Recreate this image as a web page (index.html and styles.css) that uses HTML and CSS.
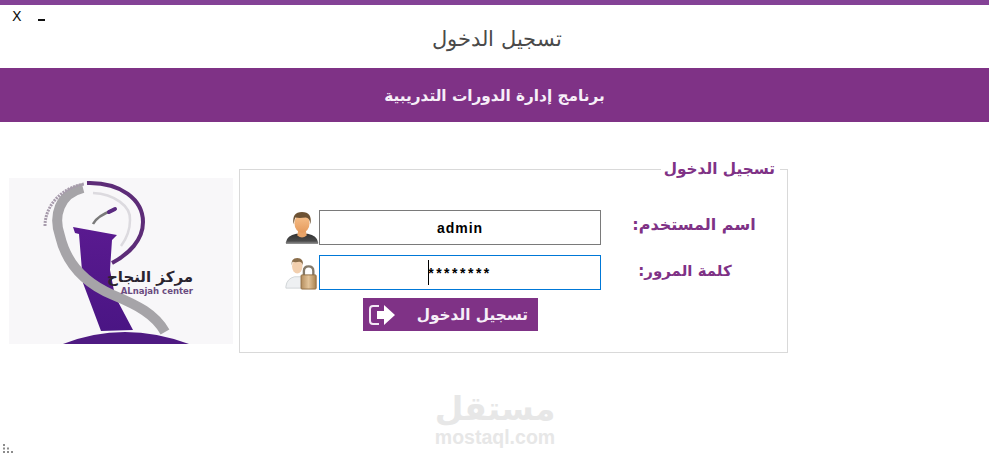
FILE: index.html
```html
<!DOCTYPE html>
<html lang="ar">
  <head>
    <meta charset="UTF-8" />
    <meta name="viewport" content="width=device-width, initial-scale=1.0" />
    <title>تسجيل الدخول</title>
    <link rel="stylesheet" href="styles.css">
  </head>
  <body>
    <div class="topbar"></div>
    <header class="header">
      <div class="window-btns">
        <span class="btn-close">X</span>
        <span class="btn-min"></span>
      </div>
      <h1 dir="rtl">تسجيل الدخول</h1>
    </header>
    <div class="banner" dir="rtl">برنامج إدارة الدورات التدريبية</div>

    <main class="main">
      <div class="logo">
        <svg width="224" height="166" viewBox="0 0 224 166">
          <defs>
            <linearGradient id="podium" x1="0" y1="0" x2="0" y2="1">
              <stop offset="0" stop-color="#5a1a90" />
              <stop offset="1" stop-color="#4a1584" />
            </linearGradient>
          </defs>
          <rect width="224" height="166" fill="#f8f7f9" />
          <path d="M54 166 Q115 142 180 166 Z" fill="#4f1a82" />
          <path d="M84 46 Q88 38 104 32" fill="none" stroke="#7a7a7a" stroke-width="2.5" />
          <path d="M100 34 L106 31" fill="none" stroke="#5a2a80" stroke-width="4" stroke-linecap="round" />
          <path d="M64 49 L66 55 L70 56 L74 105 L92 153 L124 152 L106 118 L101 92 L103 62 L108 57 Z" fill="url(#podium)" />
          <path d="M84 15 C105 16 122 28 121 42 C121 50 118 60 112 68" fill="none" stroke="#dcdadf" stroke-width="2.5" />
          <path d="M78 5 C112 4 134 22 134 44 C134 62 120 76 103 85" fill="none" stroke="#5d2c78" stroke-width="4" />
          <path d="M74 10 C50 16 44 38 51 58 C58 88 78 106 104 117 C128 127 146 136 156 154" fill="none" stroke="#a6a4a8" stroke-width="10" />
          <path d="M36 48 C36 28 52 10 75 6" fill="none" stroke="#a79bac" stroke-width="3" stroke-dasharray="2 1" />
          <text class="logo-ar" x="184" y="104" direction="rtl">مركز النجاح</text>
          <text class="logo-en" x="184" y="116" text-anchor="end">ALnajah center</text>
        </svg>
      </div>

      <fieldset class="login-box" dir="rtl">
        <legend>تسجيل الدخول</legend>
        <div class="row">
          <label class="row-label" for="user">اسم المستخدم:</label>
          <input class="field" id="user" type="text" value="admin" dir="ltr" />
          <svg class="row-icon" width="34" height="36" viewBox="0 0 36 36">
            <defs>
              <linearGradient id="skin" x1="0" y1="0" x2="0" y2="1">
                <stop offset="0" stop-color="#f9c48f" />
                <stop offset="1" stop-color="#e59a5c" />
              </linearGradient>
              <linearGradient id="shirt" x1="0" y1="0" x2="0" y2="1">
                <stop offset="0" stop-color="#333" />
                <stop offset="0.7" stop-color="#4a4a4a" />
                <stop offset="1" stop-color="#9a9a9a" />
              </linearGradient>
            </defs>
            <path d="M1 33 Q2 26 12 24 L24 24 Q34 26 35 33 L35 35 L1 35 Z" fill="url(#shirt)" />
            <path d="M14 20 L22 20 L23 26 Q18 30 13 26 Z" fill="#e8a368" />
            <ellipse cx="18" cy="13" rx="8" ry="10" fill="url(#skin)" />
            <path d="M9 14 Q7 1 18 1 Q29 1 27 14 Q26 7 22 7 Q15 8 11 7 Q10 9 9 14 Z" fill="#6d5233" />
          </svg>
        </div>
        <div class="row">
          <label class="row-label row-label-short" for="pass">كلمة المرور:</label>
          <div class="field-wrap">
            <input class="field field-focus" id="pass" type="text" value="********" dir="ltr" />
            <span class="caret"></span>
          </div>
          <svg class="row-icon" width="34" height="36" viewBox="0 0 36 36">
            <defs>
              <linearGradient id="lock" x1="0" y1="0" x2="1" y2="0">
                <stop offset="0" stop-color="#b48d5e" />
                <stop offset="0.5" stop-color="#e3c49a" />
                <stop offset="1" stop-color="#a9824f" />
              </linearGradient>
            </defs>
            <path d="M1 32 Q2 24 10 22 L18 22 L20 34 L1 34 Z" fill="#eef0f2" stroke="#cfd3d6" stroke-width="1" />
            <ellipse cx="13" cy="11" rx="5.5" ry="7.5" fill="#f2cfae" />
            <path d="M7 10 Q6 2 13 2 Q20 2 19 10 Q18 6 15 6 Q11 7 8 6 Z" fill="#8a6d4a" />
            <path d="M20 21 L20 16 Q20 11 25 11 Q30 11 30 16 L30 21" fill="none" stroke="#857a6a" stroke-width="2.5" />
            <rect x="17" y="20" width="16" height="15" rx="1" fill="url(#lock)" stroke="#8f6d43" stroke-width="1" />
          </svg>
        </div>
        <div class="actions">
          <button class="button" type="button">
            <span>تسجيل الدخول</span>
            <svg width="28" height="24" viewBox="0 0 28 24">
              <path d="M11 3 L5 3 Q2 3 2 6 L2 18 Q2 21 5 21 L11 21" fill="none" stroke="#f3e9f5" stroke-width="2" />
              <path d="M9 8 L16 8 L16 2 L27 12 L16 22 L16 16 L9 16 Z" fill="#fff" />
            </svg>
          </button>
        </div>
      </fieldset>
    </main>

    <footer class="watermark">
      <div class="wm-ar" dir="rtl">مستقل</div>
      <div class="wm-en">mostaql.com</div>
    </footer>

    <div class="grip">
      <svg width="14" height="9" viewBox="0 0 14 9" fill="#8c8c8c">
        <rect x="3" y="0" width="2" height="2" />
        <rect x="3" y="3.5" width="2" height="2" />
        <rect x="7" y="3.5" width="2" height="2" />
        <rect x="3" y="7" width="2" height="2" />
        <rect x="7" y="7" width="2" height="2" />
        <rect x="11" y="7" width="2" height="2" />
      </svg>
    </div>
  </body>
</html>
```

FILE: styles.css
```css
* {
  margin: 0;
  padding: 0;
  box-sizing: border-box;
}
body {
  position: relative;
  height: 457px;
  overflow: hidden;
  background: #fff;
  font-family: "DejaVu Sans", sans-serif;
}
.topbar {
  height: 5px;
  background-color: #844296;
}
.header {
  position: relative;
  height: 63px;
  padding-left: 5px;
  display: flex;
  align-items: center;
  justify-content: center;
}
.header h1 {
  font-size: 21px;
  font-weight: 300;
  color: #4a4a4a;
  margin-top: 5px;
}
.window-btns {
  position: absolute;
  top: 4px;
  left: 12px;
  display: flex;
  align-items: center;
  gap: 16px;
}
.btn-close {
  font-size: 14px;
  line-height: 14px;
  color: #111;
}
.btn-min {
  width: 7px;
  height: 2px;
  margin-top: 7px;
  background-color: #111;
}
.banner {
  height: 54px;
  padding-top: 1px;
  display: flex;
  align-items: center;
  justify-content: center;
  background-color: #7f3286;
  color: #f6eff8;
  font-size: 15.3px;
  font-weight: bold;
}
.main {
  display: flex;
  align-items: flex-start;
  gap: 6px;
  padding: 38px 0 0 9px;
}
.logo {
  margin-top: 18px;
  width: 224px;
  height: 166px;
}
.logo-ar {
  font-size: 15px;
  font-weight: bold;
  fill: #2a2430;
}
.logo-en {
  font-size: 8.5px;
  font-weight: bold;
  fill: #6a4b80;
}
.login-box {
  width: 549px;
  height: 193px;
  border: 1px solid #d9d9d9;
  padding: 31px 0 0 0;
}
.login-box legend {
  margin-right: 7px;
  padding: 0 5px 0 3px;
  font-size: 15.3px;
  font-weight: bold;
  line-height: 19px;
  color: #7f3286;
}
.row {
  display: flex;
  align-items: center;
  height: 35px;
  margin-bottom: 10px;
}
.row-label {
  width: 186px;
  padding-bottom: 6px;
  text-align: center;
  flex-shrink: 0;
  font-size: 16px;
  font-weight: bold;
  color: #7f3286;
}
.row-label-short {
  padding-right: 18px;
  padding-bottom: 4px;
  font-size: 15px;
}
.field-wrap {
  position: relative;
  width: 282px;
  flex-shrink: 0;
}
.field {
  width: 282px;
  height: 35px;
  flex-shrink: 0;
  border: 1px solid #7a7a7a;
  outline: none;
  text-align: center;
  font-family: "Liberation Sans", sans-serif;
  font-size: 14px;
  font-weight: bold;
  letter-spacing: 1px;
  color: #000;
}
.field-focus {
  border-color: #0078d7;
  letter-spacing: 2.5px;
}
.caret {
  position: absolute;
  top: 5px;
  left: 109px;
  width: 1px;
  height: 25px;
  background-color: #000;
}
.row-icon {
  flex-shrink: 0;
}
.actions {
  display: flex;
  margin-top: -2px;
  padding-right: 249px;
}
.button {
  width: 175px;
  height: 33px;
  display: flex;
  align-items: center;
  justify-content: space-between;
  padding: 0 10px 0 5px;
  border: none;
  background-color: #7f3286;
  color: #f6eff8;
  font-family: "DejaVu Sans", sans-serif;
  font-size: 15.3px;
  font-weight: bold;
  direction: rtl;
}
.watermark {
  margin-top: 38px;
  padding-left: 1px;
  text-align: center;
  color: #e7e7e7;
  font-weight: bold;
}
.wm-ar {
  font-size: 33px;
  line-height: 36px;
}
.wm-en {
  font-family: "Liberation Sans", sans-serif;
  font-size: 19.5px;
  line-height: 20px;
}
.grip {
  position: absolute;
  left: 0;
  bottom: 4px;
  line-height: 0;
}
```
